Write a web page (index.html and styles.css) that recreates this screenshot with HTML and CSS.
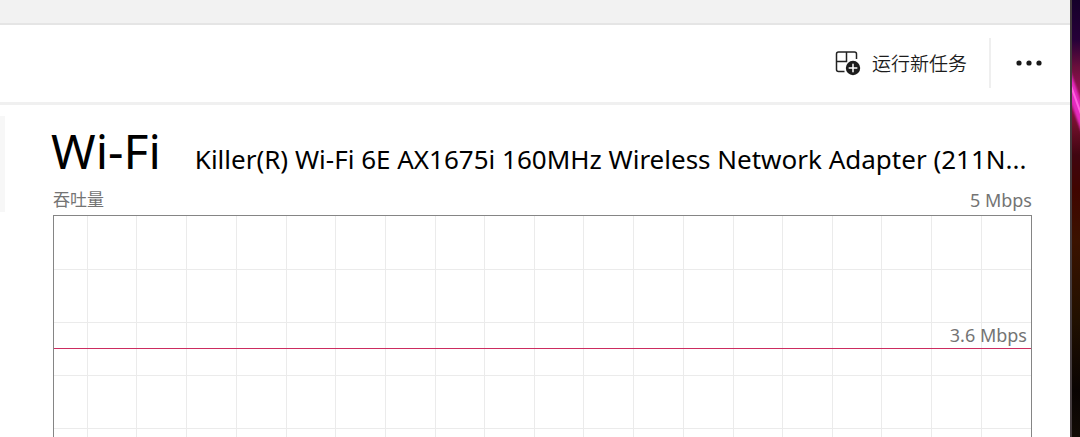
FILE: index.html
```html
<!DOCTYPE html>
<html lang="zh-CN">
<head>
<meta charset="utf-8">
<title>Wi-Fi</title>
<link rel="stylesheet" href="styles.css">
</head>
<body>
<div class="desktop">
  <div class="window">
    <div class="titlebar"></div>
    <header class="toolbar">
      <button class="task-button" type="button">
        <svg class="task-icon" width="26" height="26" viewBox="0 0 26 26" fill="none" aria-hidden="true">
          <path d="M21.500 9V4Q21.500 2 19.500 2H3.500Q1.500 2 1.500 4V19.500Q1.500 21.500 3.500 21.500H9.500M1.500 11.500H11.500V2" stroke="#222" stroke-width="1.500"/>
          <circle cx="18" cy="18" r="7.200" fill="#1c1c1c"/>
          <path d="M18 14.200V21.800M14.200 18H21.800" stroke="#fff" stroke-width="1.500" stroke-linecap="round"/>
        </svg>
        <span>运行新任务</span>
      </button>
      <span class="divider"></span>
      <button class="more-button" type="button" aria-label="更多">
        <svg width="26" height="6" viewBox="0 0 26 6" fill="#1a1a1a" aria-hidden="true"><circle cx="3" cy="3" r="2.600"/><circle cx="13" cy="3" r="2.600"/><circle cx="23" cy="3" r="2.600"/></svg>
      </button>
    </header>
    <div class="content">
      <div class="sidebar"></div>
      <main class="details">
        <div class="heading">
          <h1>Wi-Fi</h1>
          <p class="adapter">Killer(R) Wi-Fi 6E AX1675i 160MHz Wireless Network Adapter (211N...</p>
        </div>
        <div class="labels"><span class="caption">吞吐量</span><span>5 Mbps</span></div>
        <div class="chart">
          <svg class="chart-lines" width="100%" height="100%" shape-rendering="crispEdges" aria-hidden="true">
            <g stroke="#ebebeb">
              <path d="M0 53.500H4000M0 106.500H4000M0 159.500H4000M0 212.500H4000"/>
              <line x1="3.400%" x2="3.400%" y1="0" y2="100%"/>
              <line x1="8.480%" x2="8.480%" y1="0" y2="100%"/>
              <line x1="13.560%" x2="13.560%" y1="0" y2="100%"/>
              <line x1="18.640%" x2="18.640%" y1="0" y2="100%"/>
              <line x1="23.750%" x2="23.750%" y1="0" y2="100%"/>
              <line x1="28.810%" x2="28.810%" y1="0" y2="100%"/>
              <line x1="33.890%" x2="33.890%" y1="0" y2="100%"/>
              <line x1="39%" x2="39%" y1="0" y2="100%"/>
              <line x1="44.100%" x2="44.100%" y1="0" y2="100%"/>
              <line x1="49.130%" x2="49.130%" y1="0" y2="100%"/>
              <line x1="54.220%" x2="54.220%" y1="0" y2="100%"/>
              <line x1="59.300%" x2="59.300%" y1="0" y2="100%"/>
              <line x1="64.400%" x2="64.400%" y1="0" y2="100%"/>
              <line x1="69.500%" x2="69.500%" y1="0" y2="100%"/>
              <line x1="74.540%" x2="74.540%" y1="0" y2="100%"/>
              <line x1="79.700%" x2="79.700%" y1="0" y2="100%"/>
              <line x1="84.710%" x2="84.710%" y1="0" y2="100%"/>
              <line x1="89.790%" x2="89.790%" y1="0" y2="100%"/>
              <line x1="94.900%" x2="94.900%" y1="0" y2="100%"/>
            </g>
          </svg>
          <div class="threshold">3.6 Mbps</div>
        </div>
      </main>
    </div>
  </div>
  <div class="wallpaper">
    <svg class="streak" width="8" height="140" viewBox="0 0 8 140" aria-hidden="true">
      <defs><filter id="glow" x="-2" y="-1" width="5" height="3"><feGaussianBlur stdDeviation="1"/></filter></defs>
      <path d="M-2 70L10 104V134L-2 100Z" fill="#e62cc0" filter="url(#glow)"/>
      <path d="M-1 86L9 114" stroke="#ff62dc" stroke-width="2" fill="none"/>
    </svg>
  </div>
</div>
</body>
</html>
```
FILE: styles.css
```css
* { box-sizing: border-box; }
body {
  margin: 0;
  overflow: hidden;
  font-family: "Noto Sans", "Noto Sans CJK SC", sans-serif;
  color: #000;
}
.desktop {
  display: grid;
  grid-template-columns: minmax(0, 1fr) 10px;
  height: 100vh;
}
.window {
  display: flex;
  flex-direction: column;
  min-height: 0;
  background: #fff;
}
.titlebar {
  flex: none;
  height: 25px;
  background: #f2f2f2;
  border-bottom: 2px solid #e5e5e5;
}
.toolbar {
  flex: none;
  display: flex;
  align-items: center;
  justify-content: flex-end;
  height: 80px;
  padding: 0 28px 2px 0;
  border-bottom: 3px solid #f0f0f0;
}
button {
  display: flex;
  align-items: center;
  padding: 0;
  border: 0;
  background: none;
  color: #1c1c1c;
  font: inherit;
}
.task-button {
  gap: 11px;
  font-size: 19px;
  font-weight: 350;
  font-family: "Noto Sans CJK SC", sans-serif;
}
.divider {
  width: 2px;
  height: 50px;
  margin: 0 25px 0 22px;
  background: #efefef;
}
.content {
  flex: 1;
  display: flex;
  min-height: 0;
  padding-top: 11px;
}
.sidebar {
  flex: none;
  width: 5px;
  height: 96px;
  background: #f7f7f7;
}
.details {
  flex: 1;
  display: flex;
  flex-direction: column;
  min-width: 0;
  padding: 0 38px 0 48px;
}
.heading {
  display: flex;
  align-items: baseline;
  gap: 34px;
  height: 72px;
  margin-left: -2px;
}
h1 {
  margin: 0;
  font-size: 48px;
  font-weight: 400;
  line-height: 70px;
}
.adapter {
  flex: 1;
  min-width: 0;
  margin: 0;
  overflow: hidden;
  white-space: nowrap;
  text-overflow: ellipsis;
  font-size: 26px;
  line-height: 36px;
}
.labels {
  display: flex;
  justify-content: space-between;
  height: 27px;
  color: #747474;
  font-size: 18px;
  line-height: 24px;
}
.caption {
  font-size: 17px;
}
.chart {
  position: relative;
  flex: 1;
  min-height: 0;
  overflow: hidden;
  border: 1px solid #858585;
  border-bottom: 0;
}
.chart-lines {
  position: absolute;
  inset: 0;
}
.threshold {
  position: absolute;
  top: 107px;
  left: 0;
  right: 0;
  height: 26px;
  padding-right: 4px;
  border-bottom: 1px solid #cc2c60;
  color: #747474;
  font-size: 18px;
  line-height: 24px;
  text-align: right;
}
.wallpaper {
  overflow: hidden;
  border-left: 2px solid #443b3e;
  background: linear-gradient(#15002a 0, #260038 40px, #6c0f3c 68px, #a01058 95px, #70102b 125px, #400510 155px, #400500 190px, #3b1200 240px, #211000 320px, #090302 390px, #120b05 100%);
}
.streak {
  display: block;
}
```
